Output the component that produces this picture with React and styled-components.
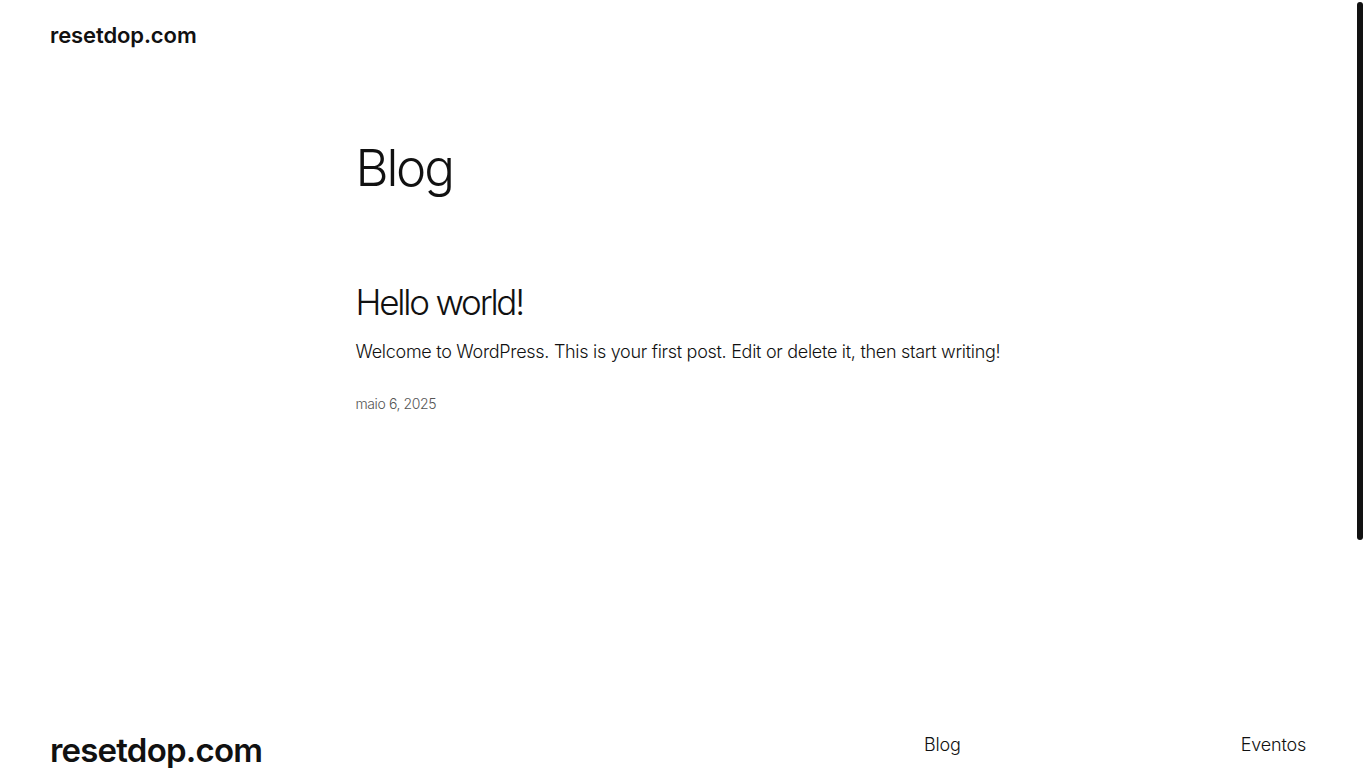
import styled, { createGlobalStyle } from 'styled-components';

const GlobalStyle = createGlobalStyle`
  html {
    background: #fff;
  }
  body {
    margin: 0;
    background: #fff;
    color: #111;
    font-family: Inter, "Noto Sans", sans-serif;
    -webkit-font-smoothing: antialiased;
  }
`;

// the reference shows the browser scrollbar, drawn here over the page edge
const ScrollTrack = styled.div`
  position: fixed;
  top: 0;
  right: 0;
  width: 10px;
  height: 100vh;
  background: #fff;
`;

const ScrollThumb = styled.div`
  position: absolute;
  top: 2px;
  left: 1px;
  width: 6px;
  height: 538px;
  border-radius: 3px;
  background: #111;
`;

const Page = styled.div`
  min-height: 1096px;
  margin-right: 10px;
  display: flex;
  flex-direction: column;
`;

const Header = styled.header`
  display: flex;
  align-items: center;
  height: 70px;
  padding: 0 50px;
`;

const SiteTitle = styled.a`
  font-size: ${(p) => (p.$large ? '33px' : '22px')};
  font-weight: 600;
  letter-spacing: ${(p) => (p.$large ? '-0.8px' : '-0.1px')};
  color: #111;
  text-decoration: none;
`;

const Main = styled.main`
  width: 645px;
  margin: 0 auto;
  padding-top: 67px;
  flex: 1;
`;

const PageTitle = styled.h1`
  margin: 0 0 83px;
  font-size: 51px;
  font-weight: 300;
  line-height: 1.2;
  letter-spacing: -2.2px;
`;

const Post = styled.article`
  display: flex;
  flex-direction: column;
`;

const PostTitle = styled.h2`
  margin: 0 0 16px;
  font-size: 35px;
  font-weight: 300;
  line-height: 1.2;
  letter-spacing: -2.2px;
`;

const Excerpt = styled.p`
  margin: 0 0 31px;
  font-size: 18px;
  font-weight: 300;
  line-height: 1.4;
  letter-spacing: -0.29px;
  white-space: nowrap;
`;

const PostDate = styled.time`
  font-size: 14px;
  font-weight: 300;
  color: #555;
  letter-spacing: -0.4px;
`;

const Footer = styled.footer`
  display: flex;
  justify-content: space-between;
  align-items: flex-start;
  padding: 0 50px 326px;
`;

const FooterNav = styled.nav`
  display: flex;
  justify-content: space-between;
  width: 382px;
  margin-top: 4px;
`;

const NavColumn = styled.div`
  display: flex;
  flex-direction: column;
  gap: 12px;
`;

const NavLink = styled.a`
  font-size: 18px;
  font-weight: 300;
  color: #111;
  text-decoration: none;
  letter-spacing: -0.2px;
`;

export default function App() {
  return (
    <>
      <GlobalStyle />
      <Page>
        <Header>
          <SiteTitle href="#">resetdop.com</SiteTitle>
        </Header>
        <Main>
          <PageTitle>Blog</PageTitle>
          <Post>
            <PostTitle>Hello world!</PostTitle>
            <Excerpt>
              Welcome to WordPress. This is your first post. Edit or delete it, then start writing!
            </Excerpt>
            <PostDate>maio 6, 2025</PostDate>
          </Post>
        </Main>
        <Footer>
          <SiteTitle href="#" $large>resetdop.com</SiteTitle>
          <FooterNav>
            <NavColumn>
              <NavLink href="#">Blog</NavLink>
            </NavColumn>
            <NavColumn>
              <NavLink href="#">Eventos</NavLink>
            </NavColumn>
          </FooterNav>
        </Footer>
      </Page>
      <ScrollTrack>
        <ScrollThumb />
      </ScrollTrack>
    </>
  );
}
